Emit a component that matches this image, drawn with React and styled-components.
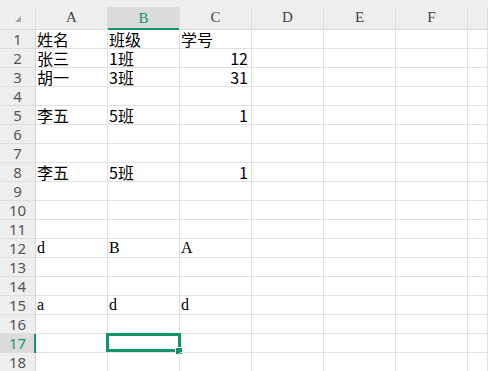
import React from 'react';
import styled, { createGlobalStyle } from 'styled-components';

const GlobalStyle = createGlobalStyle`
  html, body {
    margin: 0;
    padding: 0;
    background: #ffffff;
    overflow: hidden;
  }
`;

const GREEN = '#149467';
const SERIF = "'Liberation Serif', 'DejaVu Serif', serif";

const Sheet = styled.div`
  display: grid;
  grid-template-columns: 36px repeat(6, 72px) 1fr;
  grid-template-rows: 30px;
  grid-auto-rows: 19px;
  width: 488px;
  height: 371px;
  overflow: hidden;
  background: #fff;
  font-family: 'Noto Sans CJK SC', 'Noto Sans', sans-serif;
`;

const Corner = styled.div`
  background: #eeeeee;
  border-bottom: 1px solid #d9d9d9;
  box-sizing: border-box;
  padding-top: 7px;
  display: flex;
`;

const CornerInner = styled.div`
  flex: 1;
  border-right: 1px solid #dcdcdc;
  display: flex;
  align-items: flex-end;
  justify-content: flex-end;
  padding: 0 14px 7px 0;
`;

const Triangle = styled.span`
  width: 0;
  height: 0;
  border-left: 6px solid transparent;
  border-bottom: 6px solid #a8a8a8;
`;

const ColHeader = styled.div`
  background: #eeeeee;
  border-bottom: 1px solid #d9d9d9;
  box-sizing: border-box;
  padding-top: 7px;
  display: flex;
`;

const ColHeaderInner = styled.div`
  flex: 1;
  display: flex;
  align-items: center;
  justify-content: center;
  border-right: 1px solid #dcdcdc;
  background: ${(p) => (p.$active ? '#dcdcdc' : 'transparent')};
  box-shadow: ${(p) => (p.$active ? `inset 0 -2px 0 ${GREEN}` : 'none')};
  margin-bottom: ${(p) => (p.$active ? '-1px' : '0')};
  color: ${(p) => (p.$active ? GREEN : '#444')};
  font-family: ${SERIF};
  font-size: 15px;
  padding-bottom: 1px;
`;

const RowHeader = styled.div`
  background: ${(p) => (p.$active ? '#dcdcdc' : '#eeeeee')};
  border-right: 1px solid #d6d6d6;
  border-bottom: 1px solid #dedede;
  box-sizing: border-box;
  display: flex;
  align-items: center;
  justify-content: center;
  color: ${(p) => (p.$active ? GREEN : '#555')};
  font-family: 'Noto Sans', 'DejaVu Sans', sans-serif;
  font-size: 15px;
  line-height: 18px;
  position: relative;

  &::after {
    content: '';
    display: ${(p) => (p.$active ? 'block' : 'none')};
    position: absolute;
    right: -1px;
    top: 0;
    bottom: -1px;
    width: 2px;
    background: ${GREEN};
  }
`;

const Cell = styled.div`
  border-right: 1px solid #e1e1e1;
  border-bottom: 1px solid #e1e1e1;
  box-sizing: border-box;
  display: flex;
  align-items: flex-end;
  justify-content: ${(p) => (p.$align === 'right' ? 'flex-end' : 'flex-start')};
  padding: 0 3px 0 1px;
  color: #000;
  font-family: ${(p) =>
    p.$serif ? SERIF : "'Noto Sans CJK SC', 'Noto Sans', sans-serif"};
  font-size: ${(p) => (p.$serif ? '16px' : '16px')};
  line-height: 18px;
  white-space: nowrap;
  position: relative;
`;

const Selection = styled.div`
  position: absolute;
  left: -2px;
  top: -1px;
  right: -2px;
  bottom: 0;
  border: 3px solid ${GREEN};
  pointer-events: none;
`;

const FillHandle = styled.span`
  position: absolute;
  right: -5px;
  bottom: -6px;
  width: 6px;
  height: 6px;
  background: ${GREEN};
  border: 1px solid #fff;
`;

const columns = ['A', 'B', 'C', 'D', 'E', 'F', ''];

// value types: t = CJK text, n = number (right aligned), s = latin serif text
const data = {
  1: { A: ['姓名', 't'], B: ['班级', 't'], C: ['学号', 't'] },
  2: { A: ['张三', 't'], B: ['1班', 't'], C: ['12', 'n'] },
  3: { A: ['胡一', 't'], B: ['3班', 't'], C: ['31', 'n'] },
  5: { A: ['李五', 't'], B: ['5班', 't'], C: ['1', 'n'] },
  8: { A: ['李五', 't'], B: ['5班', 't'], C: ['1', 'n'] },
  12: { A: ['d', 's'], B: ['B', 's'], C: ['A', 's'] },
  15: { A: ['a', 's'], B: ['d', 's'], C: ['d', 's'] },
};

const activeRow = 17;
const activeCol = 'B';

const App = () => {
  const rows = Array.from({ length: 18 }, (_, i) => i + 1);

  return (
    <>
      <GlobalStyle />
      <Sheet>
        <Corner>
          <CornerInner>
            <Triangle />
          </CornerInner>
        </Corner>
        {columns.map((col, i) => (
          <ColHeader key={i}>
            <ColHeaderInner $active={col === activeCol}>{col}</ColHeaderInner>
          </ColHeader>
        ))}

        {rows.map((r) => (
          <React.Fragment key={r}>
            <RowHeader $active={r === activeRow}>{r}</RowHeader>
            {columns.map((col, i) => {
              const value = data[r] && data[r][col];
              const selected = r === activeRow && col === activeCol;
              return (
                <Cell
                  key={i}
                  $align={value && value[1] === 'n' ? 'right' : 'left'}
                  $serif={value && value[1] === 's'}
                >
                  {value ? value[0] : ''}
                  {selected && (
                    <Selection>
                      <FillHandle />
                    </Selection>
                  )}
                </Cell>
              );
            })}
          </React.Fragment>
        ))}
      </Sheet>
    </>
  );
};

export default App;
